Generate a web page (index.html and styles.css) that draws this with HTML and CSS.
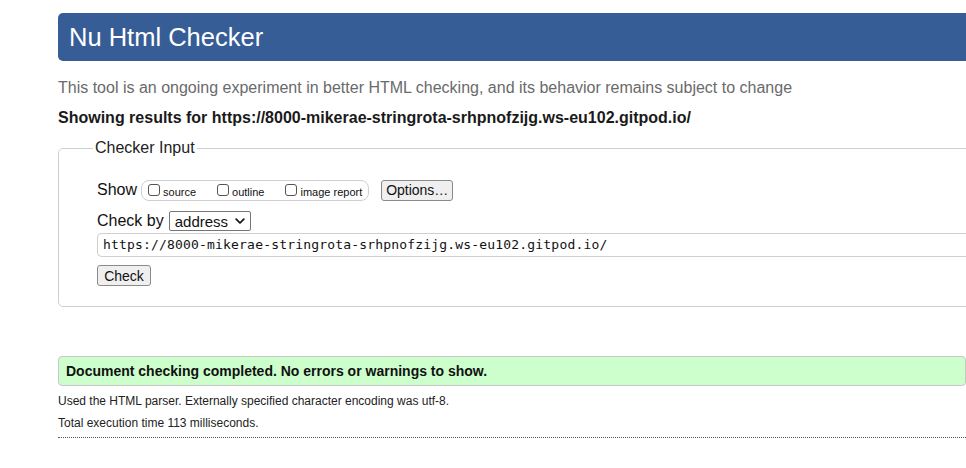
FILE: index.html
```html
<!DOCTYPE html>
<html lang="en">
<head>
<meta charset="utf-8">
<title>Nu Html Checker</title>
<link rel="stylesheet" href="styles.css">
</head>
<body>
<div class="page">
  <h1 class="banner">Nu Html Checker</h1>
  <p class="intro">This tool is an ongoing experiment in better HTML checking, and its behavior remains subject to change</p>
  <p class="showing">Showing results for https://8000-mikerae-stringrota-srhpnofzijg.ws-eu102.gitpod.io/</p>
  <fieldset class="checker">
    <legend class="legend">Checker Input</legend>
    <div class="row row-show">
      <span class="lbl">Show</span>
      <div class="group">
        <label class="opt"><span class="cb"></span><span class="opt-text">source</span></label>
        <label class="opt"><span class="cb"></span><span class="opt-text">outline</span></label>
        <label class="opt last"><span class="cb"></span><span class="opt-text">image report</span></label>
      </div>
      <span class="btn btn-options">Options…</span>
    </div>
    <div class="row row-by">
      <span class="lbl">Check by</span>
      <div class="select"><span>address</span>
        <svg class="chev" width="10" height="7" viewBox="0 0 10 7"><path d="M1.2 1.2 L5 5 L8.8 1.2" fill="none" stroke="#111" stroke-width="1.7" stroke-linecap="round" stroke-linejoin="round"/></svg>
      </div>
    </div>
    <div class="url">https://8000-mikerae-stringrota-srhpnofzijg.ws-eu102.gitpod.io/</div>
    <span class="btn btn-check">Check</span>
  </fieldset>
  <div class="success">Document checking completed. No errors or warnings to show.</div>
  <p class="meta">Used the HTML parser. Externally specified character encoding was utf-8.</p>
  <p class="meta">Total execution time 113 milliseconds.</p>
  <hr class="dots">
</div>
</body>
</html>
```
FILE: styles.css
```css
html, body {
  margin: 0;
  padding: 0;
  overflow: hidden;
  background: #fff;
}
body {
  font-family: "Liberation Sans", Arial, sans-serif;
  color: #222;
}
.page {
  padding: 13px 0 0 58px;
  width: 1000px;
}
.banner {
  margin: 0;
  height: 48px;
  line-height: 48px;
  background: #365d95;
  color: #fff;
  font-size: 25.5px;
  font-weight: normal;
  padding-left: 11px;
  border-radius: 5px;
}
.intro {
  margin: 17px 0 0;
  font-size: 16px;
  line-height: 20px;
  color: #6a6a6a;
}
.showing {
  margin: 10px 0 0;
  font-size: 16px;
  line-height: 20px;
  font-weight: bold;
  color: #1a1a1a;
}
.checker {
  margin: 10px 0 0;
  border: 1px solid #cfcfcf;
  border-radius: 5px;
  padding: 0 0 20px 38px;
  min-inline-size: 0;
}
.legend {
  font-size: 16px;
  line-height: 20px;
  padding: 0 2px;
  margin-left: -4px;
  color: #222;
}
.row {
  display: flex;
  align-items: center;
}
.lbl {
  font-size: 16px;
  color: #111;
}
.row-show {
  margin-top: 20px;
  height: 24px;
}
.group {
  display: flex;
  align-items: center;
  height: 19px;
  border: 1px solid #cfcfcf;
  border-radius: 8px;
  margin-left: 4px;
  padding: 0 6px;
}
.opt {
  display: flex;
  align-items: center;
  margin-right: 21px;
}
.opt.last { margin-right: 0; }
.cb {
  width: 10px;
  height: 10px;
  border: 1px solid #555;
  border-radius: 3px;
  background: #fff;
}
.opt-text {
  font-size: 11px;
  margin-left: 3px;
  margin-top: 3px;
  color: #111;
}
.btn {
  display: inline-flex;
  align-items: center;
  justify-content: center;
  box-sizing: border-box;
  border: 1px solid #8a8a8a;
  border-radius: 3px;
  background: #efefef;
  font-size: 14px;
  color: #111;
}
.btn-options {
  margin-left: 12px;
  width: 72px;
  height: 21px;
}
.row-by {
  margin-top: 9px;
  height: 20px;
}
.select {
  display: flex;
  align-items: center;
  justify-content: space-between;
  box-sizing: border-box;
  width: 82px;
  height: 20px;
  margin-left: 5px;
  padding: 0 5px 0 5px;
  border: 1px solid #767676;
  border-radius: 2px;
  font-size: 15px;
  color: #111;
}
.url {
  margin-top: 2px;
  box-sizing: border-box;
  height: 24px;
  line-height: 22px;
  border: 1px solid #cfcfcf;
  border-right: 0;
  border-radius: 5px 0 0 5px;
  padding-left: 5px;
  font-family: "DejaVu Sans Mono", "Liberation Mono", monospace;
  font-size: 13px;
  letter-spacing: 0.18px;
  color: #111;
}
.btn-check {
  margin-top: 8px;
  width: 54px;
  height: 21px;
}
.success {
  margin: 49px 0 0;
  width: 908px;
  box-sizing: border-box;
  height: 30px;
  line-height: 28px;
  background: #ccffcc;
  border: 1px solid #c8c8c8;
  border-radius: 4px;
  padding-left: 7px;
  font-size: 14px;
  font-weight: bold;
  color: #111;
}
.meta {
  margin: 8px 0 0;
  font-size: 12px;
  line-height: 15px;
  color: #222;
}
.meta + .meta {
  margin-top: 7px;
}
.dots {
  margin: 6px 0 0;
  border: 0;
  border-top: 1px dotted #555;
  height: 0;
}
```
